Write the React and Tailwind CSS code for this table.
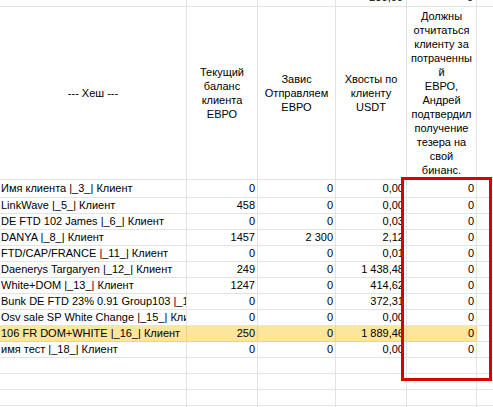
const rows = [
  ['Имя клиента |_3_| Клиент', '0', '0', '0,00', '0'],
  ['LinkWave |_5_| Клиент', '458', '0', '0,00', '0'],
  ['DE FTD 102 James |_6_| Клиент', '0', '0', '0,03', '0'],
  ['DANYA |_8_| Клиент', '1457', '2 300', '2,12', '0'],
  ['FTD/CAP/FRANCE |_11_| Клиент', '0', '0', '0,01', '0'],
  ['Daenerys Targaryen |_12_| Клиент', '249', '0', '1 438,48', '0'],
  ['White+DOM |_13_| Клиент', '1247', '0', '414,62', '0'],
  ['Bunk DE FTD 23% 0.91 Group103 |_14_| Клиент', '0', '0', '372,31', '0'],
  ['Osv sale SP White Change |_15_| Клиент', '0', '0', '0,00', '0'],
  ['106 FR DOM+WHITE |_16_| Клиент', '250', '0', '1 889,46', '0', true],
  ['имя тест |_18_| Клиент', '0', '0', '0,00', '0'],
];

const widths = ['w-[187px]', 'w-[71px]', 'w-[78px]', 'w-[71px]', 'w-[70px]'];

const lastHeader = [
  'Должны',
  'отчитаться',
  'клиенту за',
  'потраченны',
  'й',
  'ЕВРО,',
  'Андрей',
  'подтвердил',
  'получение',
  'тезера на',
  'свой',
  'бинанс.',
];

function DataRow({ cells, height, yellow }) {
  const line = yellow ? 'border-[#ecd389]' : 'border-[#e2e3e3]';
  const bg = yellow ? 'bg-[#fde59b]' : '';
  return (
    <div className={`flex ${height}`}>
      {widths.map((w, i) => (
        <div
          key={i}
          className={`${w} shrink-0 border-r border-b ${line} ${bg} overflow-hidden whitespace-nowrap flex items-center ${
            i === 0 ? 'pl-px justify-start' : 'pr-[2px] justify-end'
          }`}
        >
          {cells[i]}
        </div>
      ))}
      <div className="flex-1 border-b border-[#e2e3e3]"></div>
    </div>
  );
}

export default function App() {
  return (
    <div
      className="relative w-[493px] h-[407px] overflow-hidden bg-white text-black text-[11px] leading-[15px]"
      style={{ fontFamily: '"Liberation Sans", Arial, sans-serif' }}
    >
      {/* верхняя обрезанная строка */}
      <div className="flex h-[7px]">
        {widths.map((w, i) => (
          <div
            key={i}
            className={`${w} shrink-0 border-r border-b border-[#e2e3e3] overflow-hidden whitespace-nowrap flex justify-end pr-[3px]`}
          >
            <span className="block -mt-[10px]">{i === 3 ? '280,00' : i === 4 ? '0' : ''}</span>
          </div>
        ))}
        <div className="flex-1 border-b border-[#e2e3e3]"></div>
      </div>

      {/* Заголовки */}
      <div className="flex h-[173px] text-[11px] leading-[14px] text-center">
        <div className="w-[187px] shrink-0 border-r border-b border-[#e2e3e3] flex items-center justify-center">
          --- Хеш ---
        </div>
        <div className="w-[71px] shrink-0 border-r border-b border-[#e2e3e3] flex items-center justify-center">
          <div>
            Текущий<br />баланс<br />клиента<br />ЕВРО
          </div>
        </div>
        <div className="w-[78px] shrink-0 border-r border-b border-[#e2e3e3] flex items-center justify-center">
          <div>
            Завис<br />Отправляем<br />ЕВРО
          </div>
        </div>
        <div className="w-[71px] shrink-0 border-r border-b border-[#e2e3e3] flex items-center justify-center">
          <div className="whitespace-nowrap">
            Хвосты по<br />клиенту<br />USDT
          </div>
        </div>
        <div className="w-[70px] shrink-0 border-r border-b border-[#e2e3e3] flex items-center justify-center">
          <div className="whitespace-nowrap">
            {lastHeader.map((l, i) => (
              <div key={i}>{l}</div>
            ))}
          </div>
        </div>
        <div className="flex-1 border-b border-[#e2e3e3]"></div>
      </div>

      {/* Данные */}
      {rows.map((r, i) => (
        <DataRow key={i} cells={r} yellow={r[5]} height={i === 0 ? 'h-[18px]' : 'h-[16px]'} />
      ))}
      {[0, 1, 2, 3].map((i) => (
        <DataRow key={'e' + i} cells={['', '', '', '', '']} height="h-[16px]" />
      ))}

      {/* красная рамка */}
      <div className="absolute left-[401px] top-[177px] w-[91px] h-[204px] border-[3px] border-[#d90000]"></div>
    </div>
  );
}
